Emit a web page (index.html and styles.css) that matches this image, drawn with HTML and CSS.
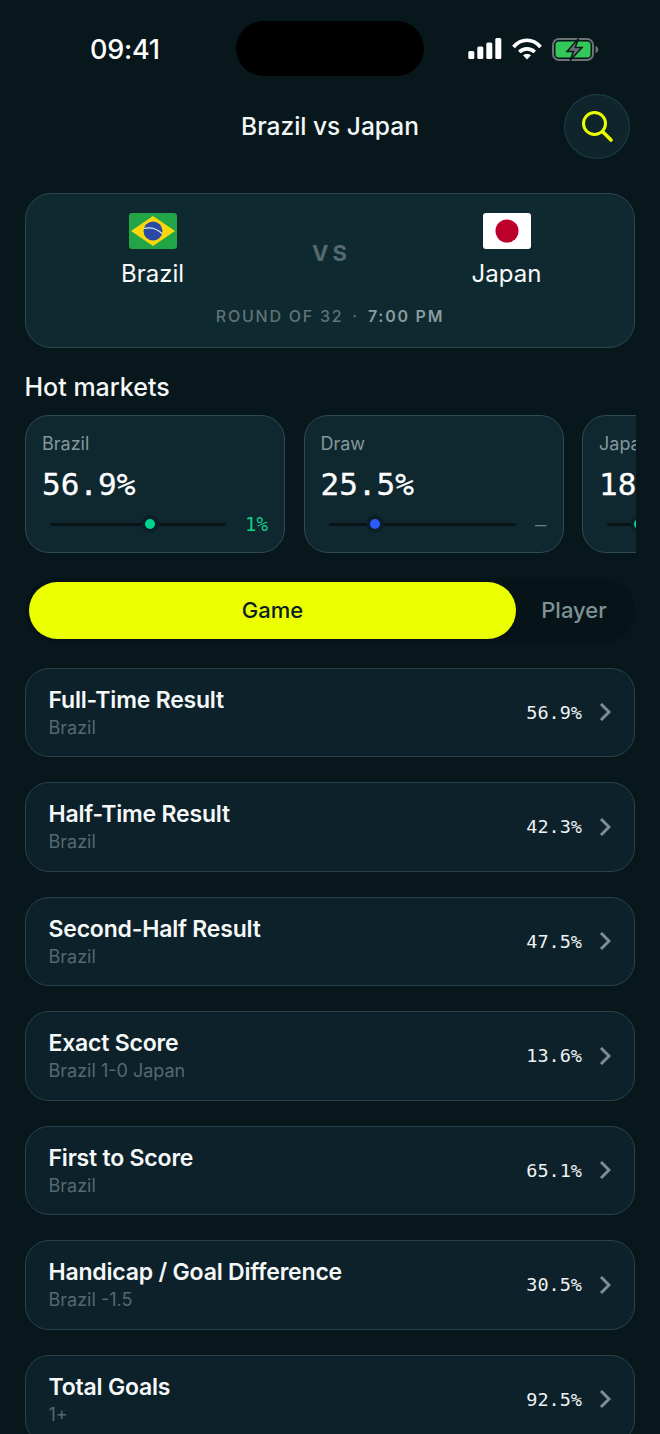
FILE: index.html
```html
<!DOCTYPE html>
<html lang="en">
<head>
<meta charset="utf-8">
<title>Brazil vs Japan</title>
<link rel="stylesheet" href="styles.css">
</head>
<body>
<div class="screen">
  <div class="status">
    <span class="clock">09:41</span>
    <div class="island"></div>
    <div class="status-icons">
      <svg class="signal" width="34" height="21" viewBox="0 0 34 21"><rect x="0.300" y="13" width="6" height="8" rx="1.500" fill="#fff"/><rect x="9.300" y="8.500" width="6" height="12.500" rx="1.500" fill="#fff"/><rect x="18.300" y="4.500" width="6" height="16.500" rx="1.500" fill="#fff"/><rect x="27.300" y="0" width="6" height="21" rx="1.500" fill="#fff"/></svg>
      <svg class="wifi" width="30" height="22" viewBox="0 0 30 22"><g fill="none" stroke="#fff" stroke-width="3.600"><path d="M1.500 9C9 0 21 0 28.500 9"/><path d="M7.300 14C11.500 9.800 18.500 9.800 22.700 14"/></g><path d="M11 17.300C13.300 15.500 16.700 15.500 19 17.300L15 21.500Z" fill="#fff"/></svg>
      <svg class="battery" width="47" height="23" viewBox="0 0 47 23"><rect x="1" y="1" width="40" height="21" rx="6" fill="none" stroke="#6b7375" stroke-width="2"/><rect x="3.500" y="3.500" width="35" height="16" rx="3.500" fill="#34c759"/><path d="M43.500 8v7c1.800-.4 2.800-2 2.800-3.500s-1-3.100-2.800-3.500Z" fill="#6b7375"/><path d="M26.500 0.500 15 13.500h6.500L18 22.500 30 9.500h-6.800Z" fill="#6b7375" stroke="#08181d" stroke-width="1.500"/></svg>
    </div>
  </div>

  <header class="topbar">
    <h1 class="title">Brazil vs Japan</h1>
    <button class="search" type="button" aria-label="Search">
      <svg width="34" height="34" viewBox="0 0 34 34"><circle cx="14.500" cy="14.500" r="11" fill="none" stroke="#ebff00" stroke-width="3"/><path d="M23 23l8 8" stroke="#ebff00" stroke-width="3.600" stroke-linecap="round"/></svg>
    </button>
  </header>

  <main class="content">
    <section class="match">
      <div class="teams">
        <div class="team">
          <svg class="flag" width="48" height="36" viewBox="0 0 48 36"><rect width="48" height="36" rx="3" fill="#22a546"/><path d="M24 3 46 18 24 33 2 18Z" fill="#fcd80b"/><circle cx="24" cy="18" r="9.500" fill="#2b4aa6"/><path d="M15 15.500C21 14 28 16 33 20.500" fill="none" stroke="#d8e6d8" stroke-width="1.200"/></svg>
          <span class="team-name">Brazil</span>
        </div>
        <span class="vs">VS</span>
        <div class="team">
          <svg class="flag" width="48" height="36" viewBox="0 0 48 36"><rect width="48" height="36" rx="3" fill="#fff"/><circle cx="24" cy="18" r="11.500" fill="#bd0029"/></svg>
          <span class="team-name">Japan</span>
        </div>
      </div>
      <p class="fixture">ROUND OF 32 <span class="dot">·</span> <b>7:00 PM</b></p>
    </section>

    <h2 class="section-title">Hot markets</h2>
    <div class="markets">
      <article class="market">
        <span class="market-label">Brazil</span>
        <span class="market-value">56.9%</span>
        <div class="market-foot">
          <div class="track"><i class="knob green" style="left:56.500%"></i></div>
          <span class="delta up">1%</span>
        </div>
      </article>
      <article class="market">
        <span class="market-label">Draw</span>
        <span class="market-value">25.5%</span>
        <div class="market-foot">
          <div class="track"><i class="knob blue" style="left:25%"></i></div>
          <span class="delta flat">–</span>
        </div>
      </article>
      <article class="market">
        <span class="market-label">Japan</span>
        <span class="market-value">18.0%</span>
        <div class="market-foot">
          <div class="track"><i class="knob green" style="left:18%"></i></div>
          <span class="delta up">1%</span>
        </div>
      </article>
    </div>

    <div class="tabs">
      <span class="tab active">Game</span>
      <span class="tab">Player</span>
    </div>

    <ul class="rows">
      <li class="row"><div class="row-text"><strong>Full-Time Result</strong><span>Brazil</span></div><em>56.9%</em><svg class="chev" width="12" height="20" viewBox="0 0 12 20"><path d="M2 2l8 8-8 8" fill="none" stroke="#7f8d90" stroke-width="3"/></svg></li>
      <li class="row"><div class="row-text"><strong>Half-Time Result</strong><span>Brazil</span></div><em>42.3%</em><svg class="chev" width="12" height="20" viewBox="0 0 12 20"><path d="M2 2l8 8-8 8" fill="none" stroke="#7f8d90" stroke-width="3"/></svg></li>
      <li class="row"><div class="row-text"><strong>Second-Half Result</strong><span>Brazil</span></div><em>47.5%</em><svg class="chev" width="12" height="20" viewBox="0 0 12 20"><path d="M2 2l8 8-8 8" fill="none" stroke="#7f8d90" stroke-width="3"/></svg></li>
      <li class="row"><div class="row-text"><strong>Exact Score</strong><span>Brazil 1-0 Japan</span></div><em>13.6%</em><svg class="chev" width="12" height="20" viewBox="0 0 12 20"><path d="M2 2l8 8-8 8" fill="none" stroke="#7f8d90" stroke-width="3"/></svg></li>
      <li class="row"><div class="row-text"><strong>First to Score</strong><span>Brazil</span></div><em>65.1%</em><svg class="chev" width="12" height="20" viewBox="0 0 12 20"><path d="M2 2l8 8-8 8" fill="none" stroke="#7f8d90" stroke-width="3"/></svg></li>
      <li class="row"><div class="row-text"><strong>Handicap / Goal Difference</strong><span>Brazil -1.5</span></div><em>30.5%</em><svg class="chev" width="12" height="20" viewBox="0 0 12 20"><path d="M2 2l8 8-8 8" fill="none" stroke="#7f8d90" stroke-width="3"/></svg></li>
      <li class="row"><div class="row-text"><strong>Total Goals</strong><span>1+</span></div><em>92.5%</em><svg class="chev" width="12" height="20" viewBox="0 0 12 20"><path d="M2 2l8 8-8 8" fill="none" stroke="#7f8d90" stroke-width="3"/></svg></li>
    </ul>
  </main>
</div>
</body>
</html>
```
FILE: styles.css
```css
* { box-sizing: border-box; }

html, body {
  margin: 0;
  padding: 0;
  background: #07171c;
}

.screen {
  width: 660px;
  height: 1434px;
  overflow: hidden;
  position: relative;
  background: #07171c;
  color: #fff;
  font-family: Inter, "Liberation Sans", sans-serif;
}

/* Status bar */
.status {
  height: 93.500px;
  display: flex;
  justify-content: space-between;
  padding: 37.500px 61px 0 90px;
}

.clock {
  font-size: 27px;
  line-height: 24px;
  font-weight: 500;
  letter-spacing: -0.200px;
}

.island {
  position: absolute;
  left: 236px;
  top: 21px;
  width: 188px;
  height: 55px;
  border-radius: 28px;
  background: #000;
}

.status-icons {
  display: flex;
  align-items: flex-start;
  gap: 10px;
  height: 24px;
}

.signal,
.wifi { margin-top: 0.500px; }

/* Page header */
.topbar {
  height: 65px;
  display: flex;
  align-items: center;
  justify-content: flex-end;
  position: relative;
  padding-right: 30.500px;
}

.title {
  position: absolute;
  left: 0;
  right: 0;
  margin: 0;
  text-align: center;
  font-size: 24.500px;
  font-weight: 500;
  line-height: 65px;
  color: #f4f7f7;
}

.search {
  width: 65.500px;
  height: 65px;
  padding: 0;
  border-radius: 50%;
  border: 1.500px solid #1b3f47;
  background: #10252b;
  display: flex;
  align-items: center;
  justify-content: center;
}

.content {
  padding: 34px 25px 0;
}

/* Match card */
.match {
  height: 155px;
  border-radius: 26px;
  border: 1.500px solid #2c474e;
  background: #0f2930;
  padding: 19px 0 0;
}

.teams {
  display: grid;
  grid-template-columns: 84px 1fr 84px;
  align-items: center;
  justify-items: center;
  padding: 0 85.500px 0 84.500px;
}

.team {
  width: 84px;
  display: flex;
  flex-direction: column;
  align-items: center;
  gap: 10px;
}

.flag { display: block; }

.team-name {
  font-size: 24px;
  line-height: 30px;
  color: #f8fafa;
}

.vs {
  margin-top: 5px;
  padding-left: 4px;
  font-size: 22px;
  font-weight: 700;
  letter-spacing: 4px;
  color: #55696e;
}

.fixture {
  margin: 17.500px 0 0;
  text-align: center;
  font-size: 16px;
  line-height: 20px;
  font-weight: 500;
  letter-spacing: 1.750px;
  color: #5f7377;
}

.fixture .dot { padding: 0 3px; }

.fixture b {
  font-weight: 600;
  color: #8a9b9e;
}

/* Hot markets */
.section-title {
  margin: 24.500px 0 12.500px -0.500px;
  font-size: 25px;
  line-height: 30px;
  font-weight: 500;
  color: #f6f8f8;
}

.markets {
  display: flex;
  gap: 18.500px;
  width: 611px;
  overflow: hidden;
}

.market {
  flex: 0 0 260px;
  height: 138px;
  border-radius: 24px;
  border: 1.500px solid #2f4a51;
  background: #0f2830;
  padding: 16px 16px 0;
  display: flex;
  flex-direction: column;
}

.market-label {
  font-size: 18px;
  line-height: 24px;
  color: #84979a;
}

.market-value {
  margin-top: 10px;
  font-family: "DejaVu Sans Mono", monospace;
  font-size: 31px;
  line-height: 36px;
  -webkit-text-stroke: 0.300px #fff;
  color: #fff;
}

.market-foot {
  margin-top: 12.800px;
  display: flex;
  align-items: center;
  gap: 19px;
  padding-left: 8px;
  height: 20px;
}

.track {
  position: relative;
  flex: 1;
  height: 3.500px;
  background: #091317;
  border-radius: 2px;
}

.knob {
  position: absolute;
  top: 50%;
  width: 18px;
  height: 18px;
  margin: -9px 0 0 -9px;
  border-radius: 50%;
  border: 4px solid #0a2026;
}

.knob.green { background: #00d68f; }
.knob.blue { background: #2e5bff; }

.delta {
  font-family: "DejaVu Sans Mono", monospace;
  font-size: 19px;
}

.delta.up { color: #14cf86; }
.delta.flat { color: #6d7f83; }

/* Game / Player switch */
.tabs {
  margin-top: 25.500px;
  height: 64.500px;
  border-radius: 33px;
  background: #06141a;
  padding: 4px;
  display: flex;
}

.tab {
  flex: 0 0 116px;
  height: 56.500px;
  text-align: center;
  line-height: 56.500px;
  font-size: 22px;
  font-weight: 500;
  color: #7f9295;
}

.tab.active {
  flex: 0 0 487px;
  border-radius: 29px;
  background: #ebff00;
  color: #0b1e24;
}

/* Market rows */
.rows {
  list-style: none;
  margin: 25px 0 0;
  padding: 0;
  display: flex;
  flex-direction: column;
  gap: 25px;
}

.row {
  height: 89.500px;
  border-radius: 24px;
  border: 1.500px solid #2a4249;
  background: #0c212a;
  padding: 0 23px 0 22.500px;
  display: flex;
  align-items: center;
}

.row-text {
  flex: 1;
  display: flex;
  flex-direction: column;
  gap: 1px;
}

.row-text strong {
  font-size: 23px;
  line-height: 30px;
  font-weight: 600;
  letter-spacing: -0.200px;
  color: #f6f8f8;
}

.row-text span {
  font-size: 18px;
  line-height: 24px;
  color: #56696e;
}

.row em {
  font-style: normal;
  font-family: "DejaVu Sans Mono", monospace;
  font-size: 18.500px;
  color: #eef2f2;
}

.chev { margin-left: 17px; }
```
